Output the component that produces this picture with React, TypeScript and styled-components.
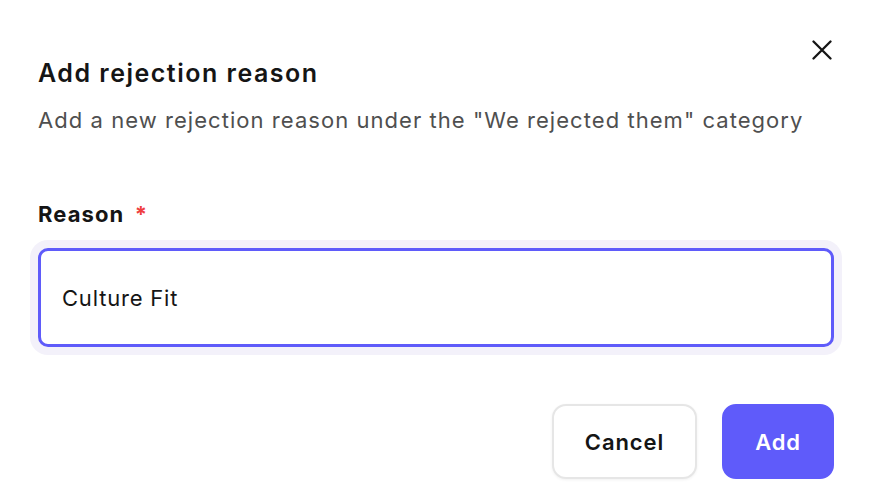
import React, { useState } from 'react'
import styled, { createGlobalStyle } from 'styled-components'

const color = {
  dark: '#151515',
  grey: '#4f4f4f',
  purple: '#5f5bfa',
  ring: '#f3f1fa',
  border: '#e6e6e6',
  red: '#ef3f3f',
}

const GlobalStyle = createGlobalStyle`
  html, body {
    margin: 0;
    padding: 0;
    background: #ffffff;
  }

  body {
    font-family: Inter, 'Noto Sans', sans-serif;
    -webkit-font-smoothing: antialiased;
  }
`

export default function App() {
  const [reason, setReason] = useState('Culture Fit')

  return (
    <>
      <GlobalStyle />
      <Dialog>
        <CloseButton aria-label="Close">
          <svg width="20" height="20" viewBox="0 0 20 20" fill="none">
            <path
              d="M1.5 1.5L18.5 18.5M18.5 1.5L1.5 18.5"
              stroke={color.dark}
              strokeWidth="2.3"
              strokeLinecap="round"
            />
          </svg>
        </CloseButton>

        <Header>
          <Title>Add rejection reason</Title>
          <Subtitle>Add a new rejection reason under the "We rejected them" category</Subtitle>
        </Header>

        <Field>
          <Label>
            Reason <Required>*</Required>
          </Label>
          <Input value={reason} onChange={(e) => setReason(e.target.value)} />
        </Field>

        <Actions>
          <Button>Cancel</Button>
          <Button $primary>Add</Button>
        </Actions>
      </Dialog>
    </>
  )
}

const Dialog = styled.div`
  position: relative;
  width: 870px;
  height: 498px;
  box-sizing: border-box;
  padding: 57px 36px 0 38px;
  background: #ffffff;

  display: flex;
  flex-direction: column;
`

const CloseButton = styled.button`
  position: absolute;
  top: 40px;
  right: 38px;
  width: 20px;
  height: 20px;
  padding: 0;
  border: none;
  background: transparent;
  cursor: pointer;

  display: flex;
  align-items: center;
  justify-content: center;
`

const Header = styled.div`
  display: flex;
  flex-direction: column;
  gap: 17px;
`

const Title = styled.h2`
  margin: 0;
  font-size: 25px;
  line-height: 32px;
  font-weight: 600;
  letter-spacing: 1.5px;
  color: ${color.dark};
`

const Subtitle = styled.p`
  margin: 0;
  font-size: 22px;
  line-height: 28px;
  font-weight: 400;
  letter-spacing: 1.05px;
  color: ${color.grey};
`

const Field = styled.div`
  margin-top: 66px;

  display: flex;
  flex-direction: column;
  gap: 20px;
`

const Label = styled.label`
  font-size: 22px;
  line-height: 28px;
  font-weight: 700;
  letter-spacing: 1.1px;
  color: ${color.dark};
`

const Required = styled.span`
  color: ${color.red};
  margin-left: 4px;
`

const Input = styled.input`
  box-sizing: border-box;
  width: 100%;
  height: 99px;
  padding: 0 21px;
  border: 3px solid ${color.purple};
  border-radius: 10px;
  box-shadow: 0 0 0 8px ${color.ring};
  outline: none;

  font-family: Inter, 'Noto Sans', sans-serif;
  font-size: 22px;
  letter-spacing: 0.8px;
  color: ${color.dark};
`

const Actions = styled.div`
  margin-top: 57px;

  display: flex;
  flex-direction: row;
  justify-content: flex-end;
  gap: 25px;
`

const Button = styled.button<{ $primary?: boolean }>`
  box-sizing: border-box;
  height: 75px;
  padding: 0 31px;
  border-radius: 14px;
  border: 2px solid ${(p) => (p.$primary ? color.purple : color.border)};
  background: ${(p) => (p.$primary ? color.purple : '#ffffff')};
  color: ${(p) => (p.$primary ? '#ffffff' : color.dark)};
  box-shadow: ${(p) => (p.$primary ? 'none' : '0 1px 3px rgba(0, 0, 0, 0.06)')};

  font-family: Inter, 'Noto Sans', sans-serif;
  font-size: 22px;
  font-weight: 600;
  letter-spacing: 0.9px;
  cursor: pointer;
`
